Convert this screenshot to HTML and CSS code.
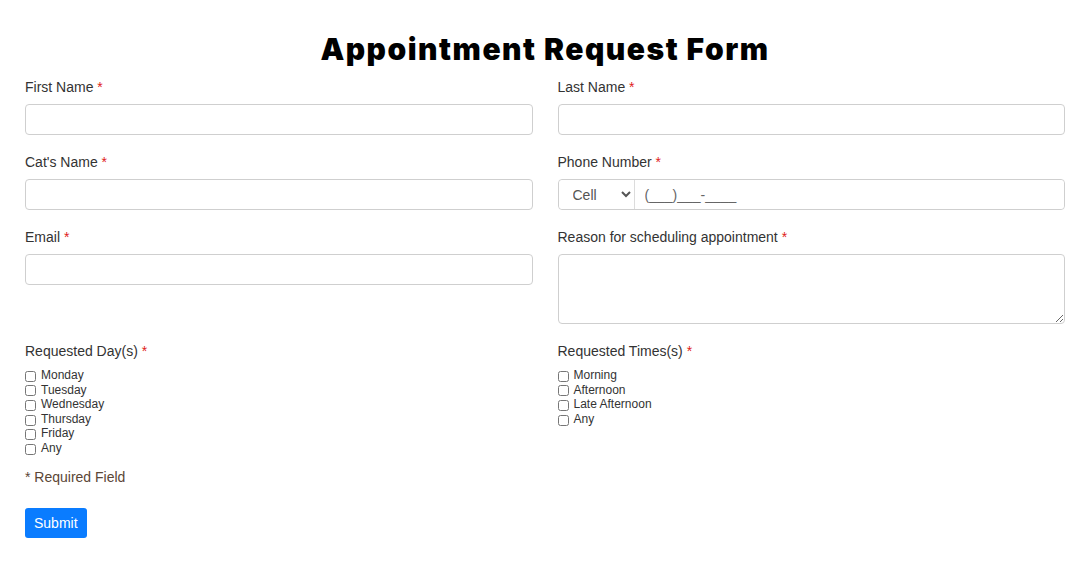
FILE: index.html
```html
<!DOCTYPE html>
<html lang="en">
<head>
  <meta charset="UTF-8">
  <meta name="viewport" content="width=device-width, initial-scale=1.0">
  <title>Appointment Request Form</title>
  <link rel="stylesheet" href="styles.css">
</head>
<body>
  <h1>Appointment Request Form</h1>
  <form class="form">
    <div class="grid">
      <div class="field">
        <label for="first">First Name <span class="req">*</span></label>
        <input type="text" id="first">
      </div>
      <div class="field">
        <label for="last">Last Name <span class="req">*</span></label>
        <input type="text" id="last">
      </div>

      <div class="field">
        <label for="cat">Cat's Name <span class="req">*</span></label>
        <input type="text" id="cat">
      </div>
      <div class="field">
        <label for="phone">Phone Number <span class="req">*</span></label>
        <div class="phone">
          <select id="phonetype">
            <option>Cell</option>
            <option>Home</option>
            <option>Work</option>
          </select>
          <input type="text" id="phone" placeholder="(___)___-____">
        </div>
      </div>

      <div class="field">
        <label for="email">Email <span class="req">*</span></label>
        <input type="email" id="email">
      </div>
      <div class="field">
        <label for="reason">Reason for scheduling appointment <span class="req">*</span></label>
        <textarea id="reason"></textarea>
      </div>

      <div class="field checks">
        <label>Requested Day(s) <span class="req">*</span></label>
        <div class="check-list">
          <label><input type="checkbox"> Monday</label>
          <label><input type="checkbox"> Tuesday</label>
          <label><input type="checkbox"> Wednesday</label>
          <label><input type="checkbox"> Thursday</label>
          <label><input type="checkbox"> Friday</label>
          <label><input type="checkbox"> Any</label>
        </div>
      </div>
      <div class="field checks">
        <label>Requested Times(s) <span class="req">*</span></label>
        <div class="check-list">
          <label><input type="checkbox"> Morning</label>
          <label><input type="checkbox"> Afternoon</label>
          <label><input type="checkbox"> Late Afternoon</label>
          <label><input type="checkbox"> Any</label>
        </div>
      </div>
    </div>

    <p class="note">* Required Field</p>
    <button type="submit">Submit</button>
  </form>
</body>
</html>
```

FILE: styles.css
```css
body {
  font-family: Arial, "Liberation Sans", sans-serif;
  margin: 0;
  padding: 0 23px 0 25px;
  background-color: #fff;
  color: #333;
}
h1 {
  font-family: Inter, "DejaVu Sans", sans-serif;
  font-weight: 900;
  font-size: 30px;
  letter-spacing: 1.5px;
  color: #000;
  text-align: center;
  margin: 32px 0 13px;
  line-height: 34px;
}
.grid {
  display: grid;
  grid-template-columns: 1fr 1fr;
  column-gap: 25px;
}
.field {
  margin-bottom: 19px;
}
.field > label {
  display: block;
  font-size: 14px;
  line-height: 16px;
  margin-bottom: 9px;
}
.req {
  color: #e02020;
}
input[type="text"], input[type="email"], textarea {
  box-sizing: border-box;
  width: 100%;
  height: 31px;
  border: 1px solid #cfcfcf;
  border-radius: 4px;
  padding: 6px 10px;
  font-family: Arial, "Liberation Sans", sans-serif;
  font-size: 14px;
}
textarea {
  height: 70px;
  resize: vertical;
  display: block;
}
.phone {
  display: flex;
  border: 1px solid #cfcfcf;
  border-radius: 4px;
  height: 31px;
  box-sizing: border-box;
}
.phone select {
  width: 76px;
  border: none;
  border-right: 1px solid #dcdcdc;
  background: #fff;
  padding: 0 6px 0 10px;
  font-family: Arial, "Liberation Sans", sans-serif;
  font-size: 14px;
  color: #555;
  border-radius: 4px 0 0 4px;
}
.phone input[type="text"] {
  flex: 1;
  border: none;
  height: 29px;
  border-radius: 0 4px 4px 0;
}
.phone input::placeholder {
  color: #666;
}
.checks {
  margin-top: 0;
  margin-bottom: 0;
}
.checks > label {
  margin-bottom: 9px;
}
.check-list label {
  display: flex;
  align-items: center;
  font-size: 12px;
  line-height: 14.6px;
}
.check-list input {
  width: 11px;
  height: 11px;
  margin: 2px 5px 0 0;
}
.note {
  font-size: 14px;
  color: #5b4636;
  margin: 13px 0 23px;
}
button {
  background-color: #0a7cff;
  color: #fff;
  border: none;
  border-radius: 3px;
  font-family: Arial, "Liberation Sans", sans-serif;
  font-size: 14px;
  padding: 0 9px;
  height: 30px;
  cursor: pointer;
}
button:hover {
  background-color: #0062cc;
}
```
